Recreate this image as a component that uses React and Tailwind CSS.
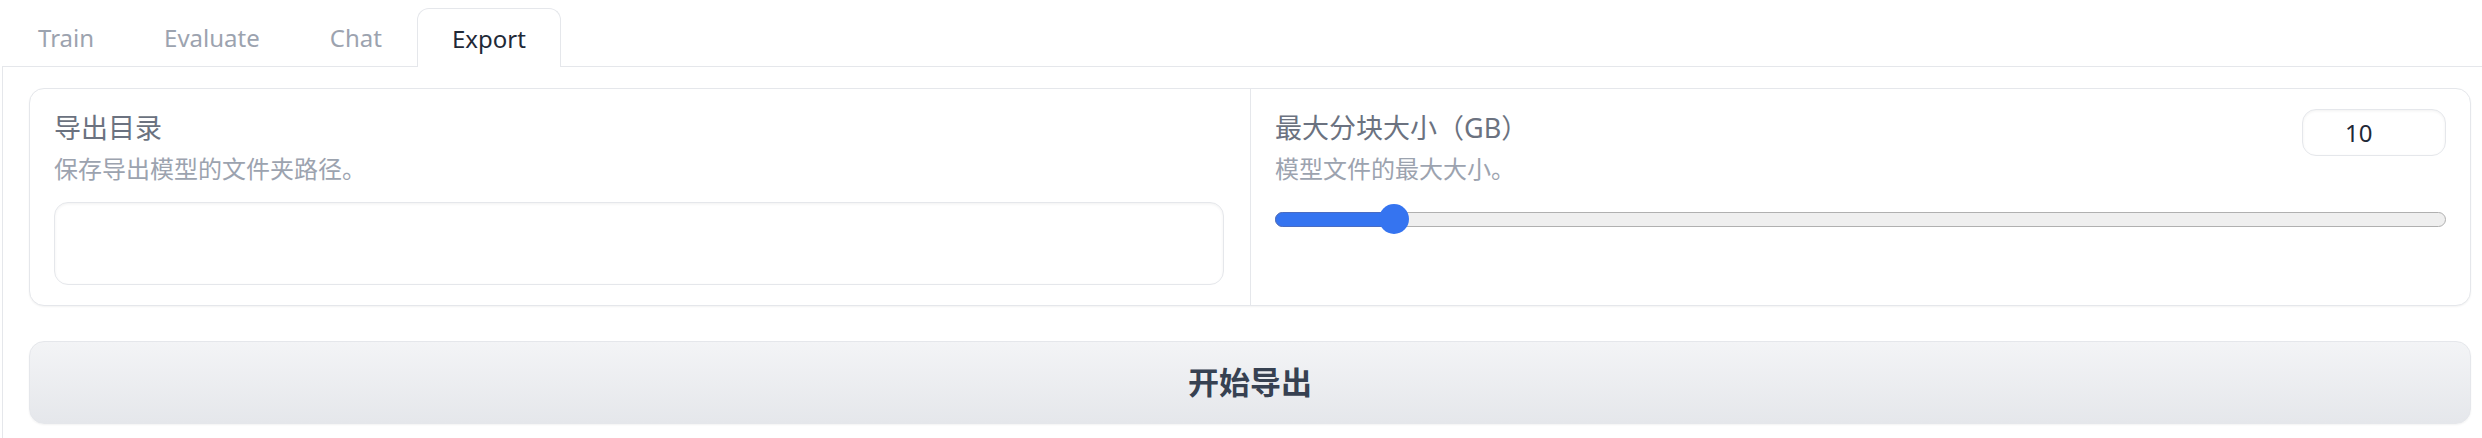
import { useState } from "react";

const TABS = ["Train", "Evaluate", "Chat", "Export"];

const FONT = "font-['Noto_Sans','Noto_Sans_CJK_SC',sans-serif]";

export default function App() {
  const [activeTab, setActiveTab] = useState("Export");
  const [size, setSize] = useState(10);
  const pct = (size - 1) / 99;

  return (
    <div className={`${FONT} w-[2482px] h-[438px] overflow-hidden bg-white pl-[2px] pt-[8px]`}>
      {/* TABS */}
      <div className="flex items-end">
        <div className="w-px self-stretch border-b border-[#e5e7eb]" />
        {TABS.map((tab) =>
          activeTab === tab ? (
            <button
              key={tab}
              onClick={() => setActiveTab(tab)}
              className="flex h-[59px] items-center rounded-t-[12px] border border-b-0 border-[#e5e7eb] bg-white px-[34px] pt-[2px] text-[24px] text-[#1f2937]"
            >
              {tab}
            </button>
          ) : (
            <button
              key={tab}
              onClick={() => setActiveTab(tab)}
              className="flex h-[59px] items-center border-b border-[#e5e7eb] px-[35px] pt-[2px] text-[24px] text-[#9ca3af]"
            >
              {tab}
            </button>
          )
        )}
        <div className="flex-1 self-stretch border-b border-[#e5e7eb]" />
      </div>

      {/* PANEL */}
      <div className="border-l border-[#e5e7eb] pl-[26px] pr-[11px] pt-[21px] pb-[20px]">
        <div className="grid grid-cols-2 rounded-[15px] border border-[#e5e7eb] bg-white shadow-[0_1px_2px_rgba(0,0,0,0.05)]">
          {/* export dir */}
          <div className="pl-[24px] pr-[26px] pt-[19px] pb-[20px]">
            <p className="text-[27px] leading-[40px] text-[#6b7280]">导出目录</p>
            <p className="mt-[3px] text-[24px] leading-[36px] text-[#9ca3af]">保存导出模型的文件夹路径。</p>
            <input
              type="text"
              className="mt-[15px] block h-[83px] w-full rounded-[14px] border border-[#e5e7eb] bg-white px-4 text-[24px] text-[#1f2937] shadow-[inset_0_1px_3px_rgba(0,0,0,0.06)] outline-none"
            />
          </div>

          {/* max shard size */}
          <div className="border-l border-[#e5e7eb] pl-[24px] pr-[24px] pt-[19px] pb-[20px]">
            <div className="flex items-start justify-between">
              <div>
                <p className="text-[27px] leading-[40px] text-[#6b7280]">最大分块大小（GB）</p>
                <p className="mt-[3px] text-[24px] leading-[36px] text-[#9ca3af]">模型文件的最大大小。</p>
              </div>
              <input
                type="text"
                value={size}
                onChange={(e) => setSize(Number(e.target.value) || 1)}
                className="mt-[1px] h-[47px] w-[144px] rounded-[14px] border border-[#e5e7eb] bg-white pl-[42px] text-[24px] text-[#1f2937] shadow-[inset_0_1px_3px_rgba(0,0,0,0.06)] outline-none"
              />
            </div>
            <div className="relative mt-[17px] flex h-[30px] items-center">
              <div className="h-[15px] w-full rounded-full border border-[#b0b0b0] bg-[#efefef]" />
              <div
                className="absolute left-0 h-[15px] rounded-l-full bg-[#3574f0] border border-[#4a6cc2]"
                style={{ width: `calc(15px + (100% - 30px) * ${pct})` }}
              />
              <div
                className="absolute h-[30px] w-[30px] rounded-full bg-[#3574f0]"
                style={{ left: `calc((100% - 30px) * ${pct})` }}
              />
            </div>
          </div>
        </div>

        <button className="mt-[35px] flex h-[83px] w-full items-center justify-center rounded-[15px] border border-[#e5e7eb] bg-gradient-to-b from-[#f3f4f6] to-[#e5e7eb] text-[31px] font-semibold text-[#374151] shadow-[0_1px_2px_rgba(0,0,0,0.05)]">
          开始导出
        </button>
      </div>
    </div>
  );
}
